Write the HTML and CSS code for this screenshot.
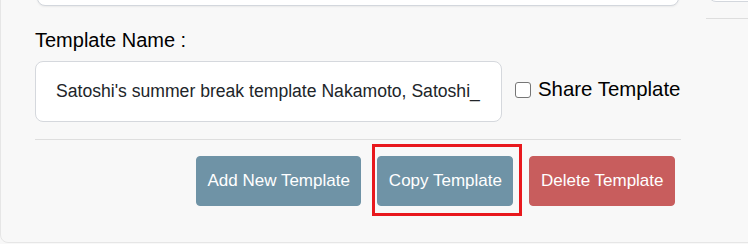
FILE: index.html
```html
<!DOCTYPE html>
<html lang="en">
<head>
    <meta charset="UTF-8">
    <title>Templates</title>
    <link rel="stylesheet" href="styles.css">
</head>
<body>
    <div class="panel">
        <div class="form-col">
            <div class="prev-field"></div>

            <label class="field-label" for="template-name">Template Name :</label>
            <div class="name-row">
                <input type="text" id="template-name" class="name-input" value="Satoshi's summer break template Nakamoto, Satoshi_">
                <label class="share">
                    <input type="checkbox" class="share-box">
                    Share Template
                </label>
            </div>

            <div class="divider"></div>

            <div class="actions">
                <button class="btn btn-muted">Add New Template</button>
                <button class="btn btn-muted highlighted">Copy Template</button>
                <button class="btn btn-danger">Delete Template</button>
            </div>
        </div>

        <div class="side-col">
            <div class="side-box"></div>
            <div class="side-line"></div>
        </div>
    </div>
</body>
</html>
```

FILE: styles.css
```css
body {
    margin: 0;
    height: 244px;
    overflow: hidden;
    background-color: #f8f8f8;
    font-family: "Liberation Sans", Arial, sans-serif;
}

.panel {
    display: flex;
    width: 780px;
    margin-top: -40px;
    padding-bottom: 36px;
    background-color: #f8f8f8;
    border: 1px solid #e6e6e6;
    border-radius: 8px;
}

.form-col {
    width: 646px;
    padding-left: 34px;
}

.prev-field {
    height: 45px;
    margin-left: 2px;
    margin-right: 2px;
    background-color: #ffffff;
    border: 1px solid #d3d7dd;
    border-radius: 8px;
    box-shadow: 0 1px 2px rgba(0, 0, 0, 0.06);
    box-sizing: border-box;
}

.field-label {
    display: block;
    margin-top: 23px;
    font-size: 20px;
    line-height: 23px;
    color: #000000;
}

.name-row {
    display: flex;
    align-items: center;
    margin-top: 9px;
}

.name-input {
    width: 467px;
    height: 61px;
    box-sizing: border-box;
    padding: 0 20px;
    border: 1px solid #d5d8dd;
    border-radius: 8px;
    background-color: #ffffff;
    font-family: "Liberation Sans", Arial, sans-serif;
    font-size: 17.6px;
    color: #212529;
}

.share {
    display: flex;
    align-items: center;
    margin-left: 13px;
    margin-top: -4px;
    font-size: 20.4px;
    color: #000000;
}

.share-box {
    appearance: none;
    width: 16px;
    height: 16px;
    margin: 0 7px 0 0;
    border: 1px solid #767676;
    border-radius: 3px;
    background-color: #ffffff;
}

.divider {
    height: 1px;
    margin-top: 17px;
    background-color: #dedede;
}

.actions {
    display: flex;
    justify-content: flex-end;
    gap: 16px;
    margin-top: 16px;
    padding-right: 6px;
}

.btn {
    height: 50px;
    padding: 0 10.5px;
    border: 1px solid transparent;
    border-radius: 4px;
    font-family: "Liberation Sans", Arial, sans-serif;
    font-size: 17px;
    color: #ffffff;
    cursor: pointer;
}

.btn-muted {
    background-color: #6f93a6;
    border-color: #6f93a6;
}

.btn-danger {
    background-color: #c85d5d;
    border-color: #c85d5d;
}

.highlighted {
    position: relative;
}

.highlighted::after {
    content: "";
    position: absolute;
    top: -13px;
    left: -6px;
    right: -10px;
    bottom: -11px;
    border: 3px solid #e8181d;
}

.side-col {
    flex: 1;
    margin-left: 25px;
}

.side-box {
    height: 41px;
    margin-left: 2px;
    background-color: #ffffff;
    border: 1px solid #d3d7dd;
    border-radius: 8px;
    box-sizing: border-box;
}

.side-line {
    height: 1px;
    margin-top: 16px;
    background-color: #dedede;
}
```
